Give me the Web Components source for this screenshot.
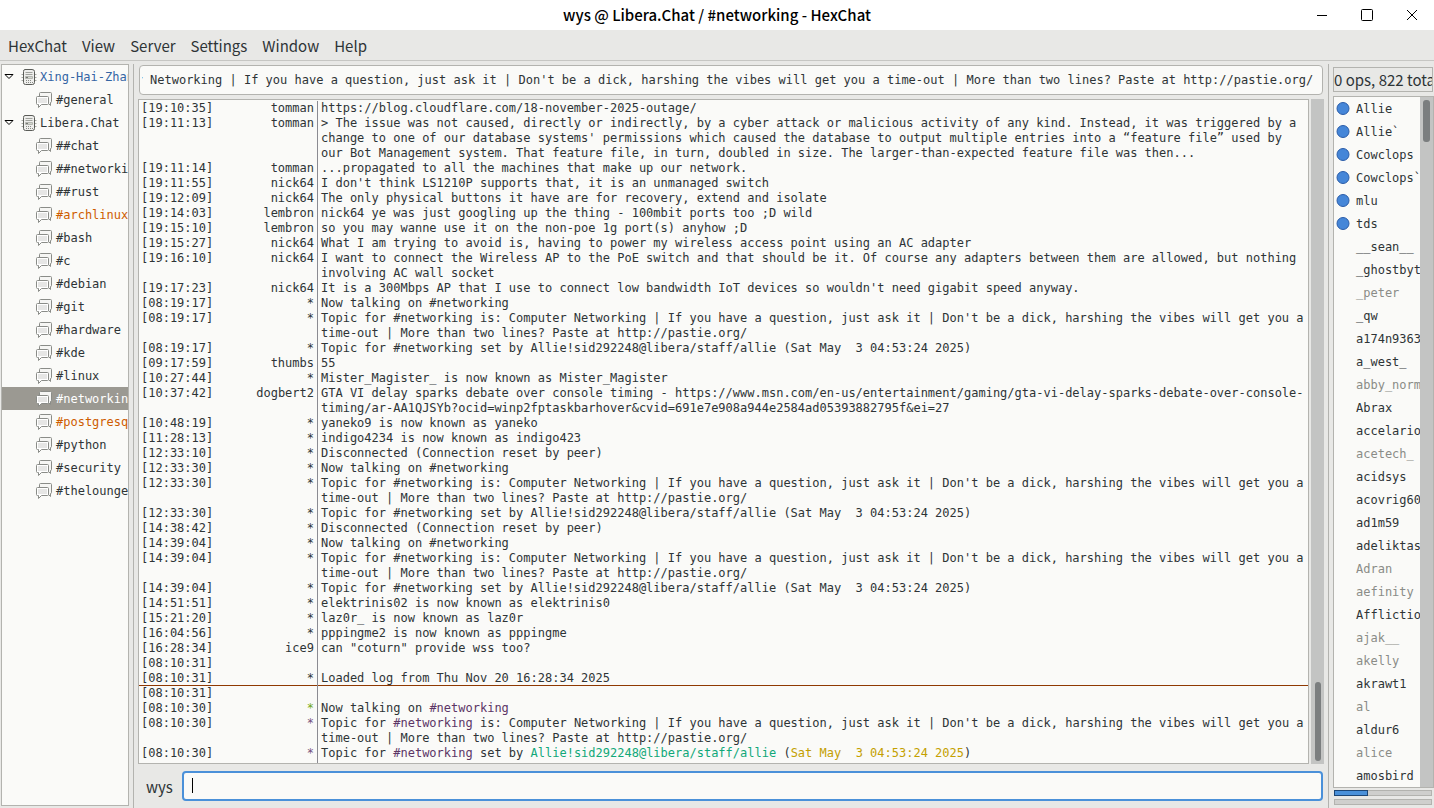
<!DOCTYPE html>
<html lang="en">
<head>
<meta charset="utf-8">
<title>wys @ Libera.Chat / #networking - HexChat</title>
<style>
  html, body {
    height: 100%;
    margin: 0;
  }
  body {
    overflow: hidden;
    background: #e8e8e6;
    color: #2e3436;
    font: 15px/22px "Noto Sans CJK SC", "Noto Sans", sans-serif;
    --mono: 12px/15px "DejaVu Sans Mono", monospace;
    --base: #fafaf8;
    --line: #b3b3af;
    --accent: #4a90d9;
  }
</style>
</head>
<body>
<hex-window>
  <title-bar slot="title">wys @ Libera.Chat / #networking - HexChat</title-bar>
  <menu-bar slot="menu"></menu-bar>
  <channel-tree slot="left"></channel-tree>
  <topic-entry slot="main"></topic-entry>
  <chat-log slot="main"></chat-log>
  <message-entry slot="main" nick="wys"></message-entry>
  <user-list slot="right" summary="0 ops, 822 total"></user-list>
</hex-window>

<script>
function attach(el, html) {
    const template = document.createElement('template');
    template.innerHTML = html;
    el.attachShadow({ mode: 'open' }).appendChild(template.content.cloneNode(true));
    return el.shadowRoot;
}

function escapeText(text) {
    return text.replace(/&/g, '&amp;').replace(/</g, '&lt;').replace(/>/g, '&gt;');
}

class HexWindow extends HTMLElement {
    constructor() {
        super();
        attach(this, `
      <style>
        :host {
          display: flex;
          flex-direction: column;
          height: 100vh;
        }
        .panes {
          flex: 1;
          min-height: 0;
          display: grid;
          grid-template-columns: 134px minmax(0, 1fr) 105px;
        }
        .left, .main {
          border-right: 1px solid var(--line);
        }
        .left, .main, .right {
          box-sizing: border-box;
          display: flex;
          flex-direction: column;
          min-width: 0;
          min-height: 0;
          margin-top: 3px;
        }
        .left {
          padding: 0 4px 2px 1px;
        }
        .main {
          gap: 4px;
          padding: 1px 5px 7px 4px;
        }
        .right {
          padding: 3px 0 3px 4px;
        }
      </style>
      <slot name="title"></slot>
      <slot name="menu"></slot>
      <div class="panes">
        <div class="left"><slot name="left"></slot></div>
        <div class="main"><slot name="main"></slot></div>
        <div class="right"><slot name="right"></slot></div>
      </div>
    `);
    }
}

class TitleBar extends HTMLElement {
    constructor() {
        super();
        attach(this, `
      <style>
        :host {
          display: grid;
          grid-template-columns: 1fr auto 1fr;
          align-items: center;
          height: 30px;
          background: #fff;
          color: #000;
        }
        h1 {
          grid-column: 2;
          margin: 0;
          font-size: 15px;
          font-weight: 500;
        }
        .controls {
          justify-self: end;
          display: flex;
        }
        button {
          display: flex;
          align-items: center;
          justify-content: center;
          width: 45px;
          height: 30px;
          padding: 0;
          border: 0;
          background: none;
        }
        svg {
          fill: none;
          stroke: #000;
        }
      </style>
      <h1><slot></slot></h1>
      <div class="controls">
        <button aria-label="Minimize"><svg width="12" height="12"><path d="M1 6.5h10"/></svg></button>
        <button aria-label="Maximize"><svg width="12" height="12"><rect x=".5" y=".5" width="11" height="11" rx="1"/></svg></button>
        <button aria-label="Close"><svg width="12" height="12"><path d="M1 1l10 10M11 1L1 11"/></svg></button>
      </div>
    `);
    }
}

class MenuBar extends HTMLElement {
    constructor() {
        super();
        const items = ['HexChat', 'View', 'Server', 'Settings', 'Window', 'Help'];
        attach(this, `
      <style>
        :host {
          display: block;
          border-bottom: 1px solid #c6c6c3;
        }
        nav {
          display: flex;
          height: 30px;
        }
        button {
          padding: 2px 7px 0 8px;
          border: 0;
          background: none;
          color: inherit;
          font: inherit;
        }
      </style>
      <nav>${items.map(item => `<button>${item}</button>`).join('')}</nav>
    `);
    }
}

const NETWORKS = [
    { name: 'Xing-Hai-Zhan', state: 'data', channels: ['#general'] },
    { name: 'Libera.Chat', state: '', channels: [
        '##chat', '##networking', '##rust', '#archlinux', '#bash', '#c', '#debian', '#git',
        '#hardware', '#kde', '#linux', '#networking', '#postgresql', '#python', '#security', '#thelounge'
    ] }
];
const UNREAD = ['#archlinux', '#postgresql'];
const CURRENT = '#networking';

const SERVER_ICON = `
  <svg width="16" height="16" viewBox="0 0 16 16" fill="none" stroke="#5a5c58">
    <path d="M.5 5.500h2M.5 8.500h2M.5 11.500h2M13.500 5.500h2M13.500 8.500h2M13.500 11.500h2" stroke="#a8aaa5"/>
    <path d="M4 .5h7q2.500 0 2.500 2v11q0 2-2 2h-7q-2 0-2-2v-11q0-2 1.500-2z" fill="#eeeeec"/>
    <path d="M4.500 3.500h7M4.500 5.500h7" stroke="#a0a29d"/>
    <path d="M4.500 7.500h7v2h-7z" fill="#d3d7cf" stroke="#b4b6b1"/>
    <path d="M5 8.500h2" stroke="#777974"/>
    <path d="M5 11.500h1M7 11.500h1M9 11.500h1M5 13.500h1M7 13.500h1M9 13.500h1M11 13.500h1" stroke="#888a85"/>
  </svg>`;

const CHANNEL_ICON = `
  <svg width="16" height="16" viewBox="0 0 16 16" stroke="#8a8c88">
    <path d="M4.500 .5h10q1 0 1 1v8q0 1-1 1v3l-2.500-2.500H3.500v-9.500q0-1 1-1z" fill="#f6f6f4"/>
    <path d="M1.500 4.500h10q1 0 1 1v6q0 1-1 1H5.500l-3 3v-3h-1q-1 0-1-1v-6q0-1 1-1z" fill="#fff"/>
    <path d="M2 6h9v5H2z" fill="#e6e6e5" stroke="none"/>
  </svg>`;

class ChannelTree extends HTMLElement {
    constructor() {
        super();
        const row = (name, cls) => `<li><a href="#" class="${cls}">${CHANNEL_ICON}<span>${name}</span></a></li>`;
        const channelClass = name => name === CURRENT ? 'current' : UNREAD.includes(name) ? 'unread' : '';
        attach(this, `
      <style>
        :host {
          flex: 1;
          min-height: 0;
          overflow: hidden;
          border: 1px solid var(--line);
          background: var(--base);
          font: var(--mono);
        }
        ul {
          margin: 0;
          padding: 0;
          list-style: none;
        }
        a {
          display: flex;
          align-items: center;
          height: 23px;
          gap: 4px;
          padding-left: 34px;
          color: #2e3436;
          text-decoration: none;
          white-space: nowrap;
        }
        svg { flex: none; }
        span { padding-top: 2px; }
        .network {
          gap: 3px;
          padding-left: 2px;
        }
        .arrow { margin-right: 4px; }
        .data { color: #3465a4; }
        .unread { color: #ce5c00; }
        .current {
          background: #9b9992;
          color: #fff;
        }
      </style>
      <ul>${NETWORKS.map(net => `
        <li>
          <a href="#" class="network ${net.state}">
            <svg class="arrow" width="10" height="10" fill="none" stroke="#000"><path d="M1 2.500h8L5 6.500z"/></svg>
            ${SERVER_ICON}<span>${net.name}</span>
          </a>
          <ul>${net.channels.map(name => row(name, channelClass(name))).join('')}</ul>
        </li>`).join('')}
      </ul>
    `);
    }
}

class TopicEntry extends HTMLElement {
    constructor() {
        super();
        const root = attach(this, `
      <style>
        :host { display: flex; }
        input {
          box-sizing: border-box;
          flex: 1;
          min-width: 0;
          height: 30px;
          margin-left: 1px;
          padding: 0 9px 0 2px;
          border: 1px solid var(--line);
          border-radius: 4px;
          background: var(--base);
          color: inherit;
          font: var(--mono);
          outline: 0;
        }
      </style>
      <input aria-label="Topic" value="Computer Networking | If you have a question, just ask it | Don't be a dick, harshing the vibes will get you a time-out | More than two lines? Paste at http://pastie.org/">
    `);
        this.input = root.querySelector('input');
    }

    connectedCallback() {
        // keep the end of a long topic in view
        this.input.scrollLeft = this.input.scrollWidth;
    }
}

const TOPIC = "Topic for #networking is: Computer Networking | If you have a question, just ask it | Don't be a dick, harshing the vibes will get you a time-out | More than two lines? Paste at http://pastie.org/";
const TOPIC_SET = 'Topic for #networking set by Allie!sid292248@libera/staff/allie (Sat May  3 04:53:24 2025)';

const LOG = [
    ['19:10:35', 'tomman', 'https://blog.cloudflare.com/18-november-2025-outage/'],
    ['19:11:13', 'tomman', "> The issue was not caused, directly or indirectly, by a cyber attack or malicious activity of any kind. Instead, it was triggered by a change to one of our database systems' permissions which caused the database to output multiple entries into a “feature file” used by our Bot Management system. That feature file, in turn, doubled in size. The larger-than-expected feature file was then..."],
    ['19:11:14', 'tomman', '...propagated to all the machines that make up our network.'],
    ['19:11:55', 'nick64', "I don't think LS1210P supports that, it is an unmanaged switch"],
    ['19:12:09', 'nick64', 'The only physical buttons it have are for recovery, extend and isolate'],
    ['19:14:03', 'lembron', 'nick64 ye was just googling up the thing - 100mbit ports too ;D wild'],
    ['19:15:10', 'lembron', 'so you may wanne use it on the non-poe 1g port(s) anyhow ;D'],
    ['19:15:27', 'nick64', 'What I am trying to avoid is, having to power my wireless access point using an AC adapter'],
    ['19:16:10', 'nick64', 'I want to connect the Wireless AP to the PoE switch and that should be it. Of course any adapters between them are allowed, but nothing involving AC wall socket'],
    ['19:17:23', 'nick64', "It is a 300Mbps AP that I use to connect low bandwidth IoT devices so wouldn't need gigabit speed anyway."],
    ['08:19:17', '*', 'Now talking on #networking'],
    ['08:19:17', '*', TOPIC],
    ['08:19:17', '*', TOPIC_SET],
    ['09:17:59', 'thumbs', '55'],
    ['10:27:44', '*', 'Mister_Magister_ is now known as Mister_Magister'],
    ['10:37:42', 'dogbert2', 'GTA VI delay sparks debate over console timing - https://www.msn.com/en-us/entertainment/gaming/gta-vi-delay-sparks-debate-over-console-timing/ar-AA1QJSYb?ocid=winp2fptaskbarhover&cvid=691e7e908a944e2584ad05393882795f&ei=27', 'url'],
    ['10:48:19', '*', 'yaneko9 is now known as yaneko'],
    ['11:28:13', '*', 'indigo4234 is now known as indigo423'],
    ['12:33:10', '*', 'Disconnected (Connection reset by peer)'],
    ['12:33:30', '*', 'Now talking on #networking'],
    ['12:33:30', '*', TOPIC],
    ['12:33:30', '*', TOPIC_SET],
    ['14:38:42', '*', 'Disconnected (Connection reset by peer)'],
    ['14:39:04', '*', 'Now talking on #networking'],
    ['14:39:04', '*', TOPIC],
    ['14:39:04', '*', TOPIC_SET],
    ['14:51:51', '*', 'elektrinis02 is now known as elektrinis0'],
    ['15:21:20', '*', 'laz0r_ is now known as laz0r'],
    ['16:04:56', '*', 'pppingme2 is now known as pppingme'],
    ['16:28:34', 'ice9', 'can "coturn" provide wss too?'],
    ['08:10:31', '', ''],
    ['08:10:31', '*', 'Loaded log from Thu Nov 20 16:28:34 2025', 'marker'],
    ['08:10:31', '', ''],
    ['08:10:30', '*', 'Now talking on #networking', 'live join'],
    ['08:10:30', '*', TOPIC, 'live'],
    ['08:10:30', '*', TOPIC_SET, 'live']
];

class ChatLog extends HTMLElement {
    constructor() {
        super();
        attach(this, `
      <style>
        :host {
          flex: 1;
          min-height: 0;
          display: flex;
          gap: 2px;
          margin-right: -1px;
          font: var(--mono);
        }
        .view {
          flex: 1;
          min-width: 0;
          display: flex;
          overflow: hidden;
          padding-top: 1px;
          border: 1px solid var(--line);
          background: var(--base);
        }
        table {
          width: 100%;
          height: 100%;
          table-layout: fixed;
          border-spacing: 0;
        }
        col.time { width: 72px; }
        col.nick { width: 107px; }
        tr { height: 15px; }
        td {
          padding: 0 0 0 3px;
          vertical-align: top;
          white-space: pre-wrap;
        }
        td.time {
          padding-left: 2px;
          white-space: nowrap;
        }
        td.nick {
          padding: 0 3px 0 0;
          border-right: 1px solid #8b8b92;
          text-align: right;
          white-space: nowrap;
        }
        .rest { height: auto; }
        .url .text { word-break: break-all; }
        .marker td { box-shadow: inset 0 -1px #8f3902; }
        .live .nick { color: #75507b; }
        .chan { color: #5c3566; }
        .join .nick { color: #73a816; }
        .host { color: #11a879; }
        .date { color: #c4a000; }
        .scrollbar {
          box-sizing: border-box;
          display: flex;
          align-items: flex-end;
          width: 13px;
          padding: 0 3px 3px 4px;
          background: #c3c4c3;
        }
        .thumb {
          flex: 1;
          height: 12%;
          border-radius: 3px;
          background: #7b7e7f;
        }
      </style>
      <div class="view">
        <table aria-label="Messages">
          <colgroup><col class="time"><col class="nick"><col></colgroup>
          <tbody>
            ${LOG.map(entry => this.row(...entry)).join('')}
            <tr class="rest"><td></td><td class="nick"></td><td></td></tr>
          </tbody>
        </table>
      </div>
      <div class="scrollbar"><div class="thumb"></div></div>
    `);
    }

    row(time, nick, message, cls = '') {
        let text = escapeText(message);
        if (cls.includes('live')) {
            text = text
                .replace('#networking', '<span class="chan">$&</span>')
                .replace(/Allie!\S+/, '<span class="host">$&</span>')
                .replace(/Sat May[^)]+/, '<span class="date">$&</span>');
        }
        return `<tr class="${cls}"><td class="time">[${time}]</td><td class="nick">${nick}</td><td class="text">${text}</td></tr>`;
    }
}

class MessageEntry extends HTMLElement {
    constructor() {
        super();
        const root = attach(this, `
      <style>
        :host {
          display: flex;
          align-items: center;
          margin-top: 3px;
        }
        label {
          padding: 2px 9px 0 8px;
        }
        input {
          box-sizing: border-box;
          flex: 1;
          min-width: 0;
          height: 30px;
          padding: 0 8px;
          border: 2px solid var(--accent);
          border-radius: 4px;
          background: linear-gradient(#000, #000) 8px 5px / 1px 15px no-repeat var(--base);
          caret-color: transparent;
          color: #000;
          font: var(--mono);
          outline: 0;
        }
        input:not(:placeholder-shown) {
          background: var(--base);
          caret-color: #000;
        }
      </style>
      <label for="message"></label>
      <input id="message" type="text" placeholder=" " autocomplete="off">
    `);
        root.querySelector('label').textContent = this.getAttribute('nick');
        this.input = root.querySelector('input');
    }

    connectedCallback() {
        this.input.focus();
    }
}

// a leading "@" marks a user with voice, a leading "-" one who is away
const USERS = [
    '@Allie', '@Allie`', '@Cowclops', '@Cowclops`', '@mlu', '@tds', '__sean__', '_ghostbyte', '-_peter', '_qw',
    'a174n9363', 'a_west_', '-abby_normal', 'Abrax', 'accelario', '-acetech_', 'acidsys', 'acovrig60', 'ad1m59',
    'adeliktas', '-Adran', '-aefinity', 'Affliction', '-ajak__', '-akelly', 'akrawt1', '-al', 'aldur6', '-alice', 'amosbird'
];

class UserList extends HTMLElement {
    constructor() {
        super();
        attach(this, `
      <style>
        :host {
          flex: 1;
          min-height: 0;
          display: flex;
          flex-direction: column;
        }
        .summary, .list {
          overflow: hidden;
          border: 1px solid var(--line);
        }
        .summary {
          height: 23px;
          margin: 0 1px 4px 0;
          line-height: 24px;
          white-space: nowrap;
        }
        .list {
          flex: 1;
          min-height: 0;
          display: flex;
          margin-bottom: 2px;
          background: var(--base);
          font: var(--mono);
        }
        ul {
          flex: 1;
          min-width: 0;
          overflow: hidden;
          margin: 0;
          padding: 0;
          list-style: none;
        }
        li {
          display: flex;
          align-items: center;
          height: 23px;
          gap: 6px;
          padding-left: 2px;
          white-space: nowrap;
        }
        svg { flex: none; }
        span { padding-top: 2px; }
        .away { color: #8a8c87; }
        .scrollbar {
          box-sizing: border-box;
          width: 13px;
          padding: 3px;
          background: #c3c4c3;
        }
        .thumb {
          height: 42px;
          border-radius: 3px;
          background: #7b7e7f;
        }
        .meter {
          box-sizing: border-box;
          height: 6px;
          margin: 0 2px 0 1px;
          border: 1px solid var(--line);
          background: #cfcfcd;
        }
        .meter + .meter { margin-top: 3px; }
        .fill {
          box-sizing: border-box;
          width: 35%;
          height: 6px;
          margin: -1px;
          border: 1px solid #1d4675;
          background: var(--accent);
        }
      </style>
      <div class="summary">${this.getAttribute('summary')}</div>
      <div class="list">
        <ul>${USERS.map(user => this.row(user)).join('')}</ul>
        <div class="scrollbar"><div class="thumb"></div></div>
      </div>
      <div class="meter"><div class="fill"></div></div>
      <div class="meter"></div>
    `);
    }

    row(user) {
        const name = user.replace(/^[@-]/, '');
        const dot = user[0] === '@' ? '<circle cx="7" cy="6.500" r="6" fill="#4586d8" stroke="#2a5ca8"/>' : '';
        return `<li class="${user[0] === '-' ? 'away' : ''}"><svg width="14" height="14">${dot}</svg><span>${name}</span></li>`;
    }
}

customElements.define('hex-window', HexWindow);
customElements.define('title-bar', TitleBar);
customElements.define('menu-bar', MenuBar);
customElements.define('channel-tree', ChannelTree);
customElements.define('topic-entry', TopicEntry);
customElements.define('chat-log', ChatLog);
customElements.define('message-entry', MessageEntry);
customElements.define('user-list', UserList);
</script>
</body>
</html>
